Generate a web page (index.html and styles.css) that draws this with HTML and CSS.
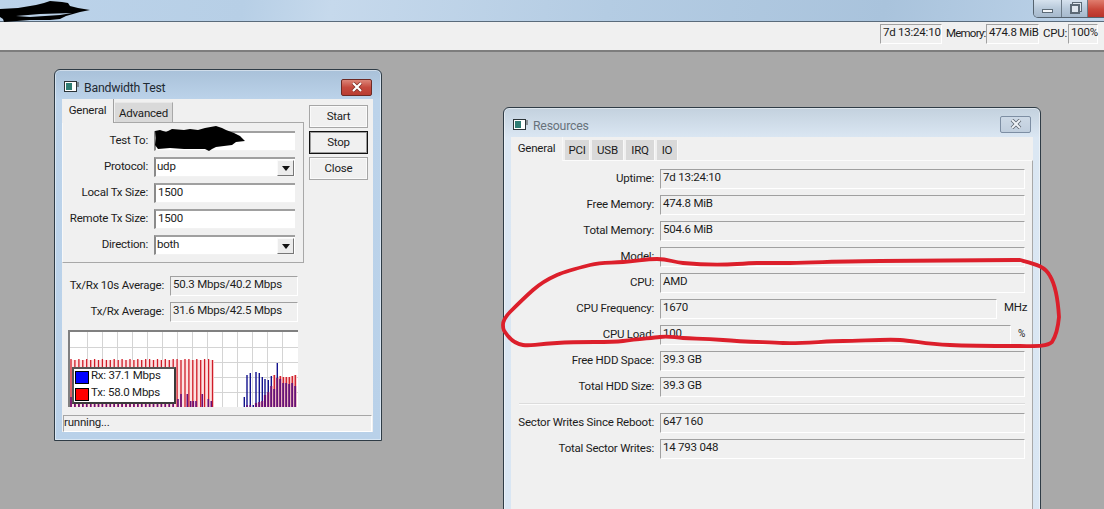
FILE: index.html
```html
<!DOCTYPE html>
<html lang="en">
<head>
<meta charset="utf-8">
<title>WinBox</title>
<link rel="stylesheet" href="styles.css">
</head>
<body>
<div class="app">
  <header class="titlebar">
    <div class="caption-buttons">
      <span class="cap cap-min"><i class="min-glyph"></i></span>
      <span class="cap cap-restore"><i class="restore-glyph"></i></span>
      <span class="cap cap-close"></span>
    </div>
  </header>
  <div class="toolbar">
    <span class="field-ro stat stat-time">7d 13:24:10</span>
    <span class="stat-label stat-label-mem">Memory:</span>
    <span class="field-ro stat stat-mem">474.8 MiB</span>
    <span class="stat-label stat-label-cpu">CPU:</span>
    <span class="field-ro stat stat-cpu">100%</span>
  </div>
  <main class="desktop">
    <section class="window win-bw">
      <div class="win-title">
        <svg class="win-icon" width="15" height="12" viewBox="0 0 15 12"><rect x=".5" y=".5" width="12" height="10" fill="#fff" stroke="#2c3438"/><rect x="2" y="2" width="6" height="7" fill="#2f7d74"/><path d="M14 1v5" stroke="#444" stroke-width="1"/></svg>
        <span class="win-name">Bandwidth Test</span>
        <span class="close close-active"><svg width="14" height="10" viewBox="0 0 14 10"><path d="M3 1l8 8M11 1l-8 8" stroke="#7c2a22" stroke-width="3.6"/><path d="M3 1l8 8M11 1l-8 8" stroke="#fff" stroke-width="2.2"/></svg></span>
      </div>
      <div class="win-body">
        <div class="bw-top">
          <div class="bw-left">
            <div class="tabs">
              <span class="tab tab-on tab-on-bw">General</span>
              <span class="tab tab-adv">Advanced</span>
            </div>
            <div class="panel panel-bw">
              <label class="lbl">Test To:</label><span class="field-ed"></span>
              <label class="lbl">Protocol:</label><span class="field-ed combo">udp<i class="drop"></i></span>
              <label class="lbl">Local Tx Size:</label><span class="field-ed">1500</span>
              <label class="lbl">Remote Tx Size:</label><span class="field-ed">1500</span>
              <label class="lbl">Direction:</label><span class="field-ed combo">both<i class="drop"></i></span>
            </div>
          </div>
          <div class="bw-buttons">
            <button class="btn">Start</button>
            <button class="btn btn-default">Stop</button>
            <button class="btn">Close</button>
          </div>
        </div>
        <div class="bw-stats">
          <label class="lbl">Tx/Rx 10s Average:</label><span class="field-ro">50.3 Mbps/40.2 Mbps</span>
          <label class="lbl">Tx/Rx Average:</label><span class="field-ro">31.6 Mbps/42.5 Mbps</span>
        </div>
        <div class="chart">
          <svg class="chart-svg" width="230" height="77" viewBox="0 0 230 77">
            <path d="M19.5 0V77M34.5 0V77M49.5 0V77M64.5 0V77M79.5 0V77M94.5 0V77M109.5 0V77M124.5 0V77M139.5 0V77M154.5 0V77M169.5 0V77M184.5 0V77M199.5 0V77M214.5 0V77M0 17.5H230M0 32.5H230M0 47.5H230M0 62.5H230" stroke="#d4d4d4" fill="none"/>
            <rect class="band" x="2" y="30" width="144" height="47"/>
            <path class="halo" d="M188 73V77M191.3 72V77M194.3 71V77M197 65V77M200.3 62V77M203.3 56V77M206.3 45V77M209.3 48V77M212.3 46V77M215.3 47V77M218.3 47V77M221.3 47V77M224.3 46V77M227.3 45V77"/>
            <path class="bar-red" d="M3 29V77M6.9 30V77M10.9 29V77M14.8 30V77M18.7 29V77M22.7 30V77M26.6 29V77M30.5 30V77M34.4 29V77M38.4 30V77M42.3 30V77M46.2 29V77M50.2 30V77M54.1 29V77M58 30V77M62 29V77M65.9 30V77M69.8 29V77M73.7 30V77M77.7 29V77M81.6 29V77M85.5 30V77M89.5 29V77M93.4 30V77M97.3 29V77M101.3 30V77M105.2 29V77M109.1 29V77M113 30V77M117 29V77M120.9 29V77M124.8 30V77M128.8 29V77M132.7 30V77M136.6 29V77M140.6 29V77M144.5 30V77"/>
            <path class="bar-red" d="M188 73V77M191.3 72V77M194.3 71V77M197 65V77M200.3 62V77M203.3 56V77M206.3 45V77M209.3 48V77M212.3 46V77M215.3 47V77M218.3 47V77M221.3 47V77M224.3 46V77M227.3 45V77"/>
            <path class="bar-blue" d="M176.3 67V77M179 45V77M182.3 43V77M185.3 75V77M188 42V77M191.3 43V77M194.3 47V77M197 49V77M200.3 50V77M203.3 46V77M206.3 59V77M209.3 33V77M212.3 49V77M215.3 53V77M218.3 53V77M221.3 54V77M224.3 53V77M227.3 56V77"/>
            <path class="bar-purple" d="M3 67V77M6.9 74V77M10.9 74V77M14.8 74V77M18.7 74V77M22.7 74V77M26.6 74V77M30.5 74V77M34.4 74V77M38.4 74V77M42.3 74V77M46.2 74V77M50.2 74V77M54.1 74V77M58 74V77M62 74V77M65.9 74V77M69.8 74V77M73.7 74V77M77.7 74V77M81.6 74V77M85.5 74V77M89.5 74V77M93.4 74V77M97.3 74V77M101.3 74V77M105.2 74V77M110 69V77M113 64V77M119.3 64V77M122.7 71V77M125.3 71V77M128 71V77M134.3 64V77M140.3 69V77M143.3 71V77"/>
            <path class="bar-purple" d="M179 75V77M182.3 75V77M188 73V77M191.3 72V77M194.3 71V77M197 65V77M200.3 62V77M203.3 56V77M206.3 59V77M209.3 48V77M212.3 49V77M215.3 53V77M218.3 53V77M221.3 54V77M224.3 53V77M227.3 56V77"/>
          </svg>
          <div class="legend">
            <div class="legend-row"><i class="swatch swatch-rx"></i><span class="legend-text">Rx: 37.1 Mbps</span></div>
            <div class="legend-row"><i class="swatch swatch-tx"></i><span class="legend-text">Tx: 58.0 Mbps</span></div>
          </div>
        </div>
        <div class="statusbar">running...</div>
      </div>
    </section>

    <section class="window win-res">
      <div class="win-title">
        <svg class="win-icon" width="15" height="12" viewBox="0 0 15 12"><rect x=".5" y=".5" width="12" height="10" fill="#fff" stroke="#2c3438"/><rect x="2" y="2" width="6" height="7" fill="#2f7d74"/><path d="M14 1v5" stroke="#444" stroke-width="1"/></svg>
        <span class="win-name win-name-off">Resources</span>
        <span class="close close-off"><svg width="14" height="10" viewBox="0 0 14 10"><path d="M3 1l8 8M11 1l-8 8" stroke="#5d6670" stroke-width="3.6"/><path d="M3 1l8 8M11 1l-8 8" stroke="#eef2f6" stroke-width="2"/></svg></span>
      </div>
      <div class="win-body">
        <div class="tabs tabs-res">
          <span class="tab tab-on tab-on-res">General</span>
          <span class="tab tab-pci">PCI</span>
          <span class="tab tab-usb">USB</span>
          <span class="tab tab-irq">IRQ</span>
          <span class="tab tab-io">IO</span>
        </div>
        <div class="panel panel-res">
          <label class="lbl">Uptime:</label><span class="field-ro">7d 13:24:10</span>
          <label class="lbl">Free Memory:</label><span class="field-ro">474.8 MiB</span>
          <label class="lbl">Total Memory:</label><span class="field-ro">504.6 MiB</span>
          <label class="lbl">Model:</label><span class="field-ro"></span>
          <label class="lbl">CPU:</label><span class="field-ro">AMD</span>
          <label class="lbl">CPU Frequency:</label><div class="unit-row"><span class="field-ro grow">1670</span><span class="unit unit-mhz">MHz</span></div>
          <label class="lbl">CPU Load:</label><div class="unit-row"><span class="field-ro grow">100</span><span class="unit unit-pct">%</span></div>
          <label class="lbl">Free HDD Space:</label><span class="field-ro">39.3 GB</span>
          <label class="lbl">Total HDD Size:</label><span class="field-ro">39.3 GB</span>
          <hr class="sep">
          <label class="lbl">Sector Writes Since Reboot:</label><span class="field-ro">647 160</span>
          <label class="lbl">Total Sector Writes:</label><span class="field-ro">14 793 048</span>
        </div>
      </div>
    </section>
  </main>

  <svg class="scribble" width="1104" height="509" viewBox="0 0 1104 509">
    <path class="ink" d="M0 9L18 8L36 5L44 3L50 1L62 2L68 3L70 6L78 8L90 10L80 12L73 14L66 16L60 19L50 20L30 20L4 22L3 19L0 17Z"/>
    <path class="ink-gap" d="M16 16L40 14L72 13L60 15L30 17Z"/>
    <path class="ink" d="M155 131L160 130L166 132L172 129L184 130L190 129L198 130L205 128L216 126L222 128L226 130L234 133L240 136L245 141L236 142L232 145L224 146L216 147L212 149L209 151L205 149L196 149L184 149L170 148L158 149L155 145L156 138Z"/>
    <path class="pen" d="M790 263C830 262 851 261 880 261S965 260 1020 260C1035 264 1045 266 1050 276C1056 286 1058 300 1059 317C1058 328 1056 336 1052 342C1046 347 1035 346 1020 346S970 346 950 345C925 344 915 341 900 340S860 341 843 341S800 344 783 343S745 342 723 340S695 339 683 338S668 336 660 337S640 339 623 341S585 341 557 343S530 346 523 345S512 341 508 336S503 330 503 325S506 316 510 312S524 298 533 290S548 279 557 275S578 268 590 265S608 263 623 262S645 259 657 259S672 262 683 263S720 265 737 264S750 263 757 263S775 263 790 263Z"/>
  </svg>
</div>
</body>
</html>
```
FILE: styles.css
```css
* { box-sizing: border-box; }
html, body { margin: 0; height: 100%; overflow: hidden; }
body { font: 11.5px/1 Roboto, "Liberation Sans", Arial, sans-serif; letter-spacing: -.22px; color: #1c1c1c; }

.app { position: relative; display: flex; flex-direction: column; height: 509px; overflow: hidden; }

.titlebar { height: 22px; display: flex; justify-content: flex-end; align-items: flex-start; background: linear-gradient(100deg, #bcd3ea 0%, #b7cfe6 22%, #c6d9ec 30%, #b4cce3 55%, #a9c3dc 80%, #bdd3e9 100%); border-bottom: 1px solid #5a6b7b; }
.caption-buttons { display: flex; height: 18px; border: 1px solid #55636f; border-top: 0; border-radius: 0 0 0 5px; overflow: hidden; margin-right: -2px; }
.cap { display: flex; align-items: center; justify-content: center; height: 100%; border-right: 1px solid #6b7a87; background: linear-gradient(#d6e2ee, #b8c9da 50%, #a6b9cc); }
.cap-min { width: 28px; }
.cap-restore { width: 26px; }
.cap-close { width: 17px; border-right: 0; background: linear-gradient(#e07d6e, #c9473a 55%, #b8332a); }
.min-glyph { display: block; width: 11px; height: 4px; margin-top: 5px; background: #f4f7fa; border: 1px solid #5c6a76; }
.restore-glyph { display: block; width: 10px; height: 10px; background: #dfe7ef; border: 2px solid #5c6a76; box-shadow: 2px -2px 0 -1px #dfe7ef, 2px -2px 0 0 #5c6a76; }

.toolbar { height: 30px; flex: none; display: flex; align-items: center; justify-content: flex-end; padding: 0 6px 5px 0; background: #f0f0f0; border-bottom: 2px solid #7d7d7d; }
.stat { height: 17px; padding-bottom: 1px; }
.stat-time { width: 62px; }
.stat-mem { width: 53px; }
.stat-cpu { width: 30px; }
.stat-label { margin: 0 2px 0 4px; white-space: nowrap; }
.stat-label-mem { width: 38px; letter-spacing: -.75px; }
.stat-label-cpu { margin-right: 1px; margin-left: 4px; }

.desktop { position: relative; flex: 1; background: #a9a9a9; overflow: hidden; }

.window { position: absolute; display: flex; flex-direction: column; border: 1px solid #2f3c46; border-radius: 6px 6px 0 0; box-shadow: inset 0 0 0 1px rgba(255, 255, 255, .45); padding: 0 8px 8px 7px; }
.win-bw { left: 54px; top: 17px; width: 328px; height: 372px; background: linear-gradient(#a9c1d9, #bcd3ea 30px, #b9d1e9); }
.win-res { left: 503px; top: 55px; width: 538px; height: 420px; background: linear-gradient(#c3d1de, #dbe7f3 30px, #d9e6f3); padding-right: 7px; }

.win-title { height: 29px; flex: none; display: flex; align-items: center; padding: 5px 1px 0 2px; }
.win-icon { flex: none; margin-right: 5px; }
.win-name { flex: 1; font-size: 12.3px; color: #1f2a33; padding-top: 2px; }
.win-name-off { color: #68727b; }
.close { display: flex; align-items: center; justify-content: center; width: 31px; height: 17px; border-radius: 2px; }
.close-active { background: linear-gradient(#dc8578, #c54a3e 50%, #b93c31); border: 1px solid #6d2a24; }
.close-off { background: linear-gradient(#cdd9e6, #c0cedd); border: 1px solid #7d8ea3; margin-right: 1px; margin-top: -2px; }

.win-body { flex: 1; background: #f0f0f0; display: flex; flex-direction: column; min-height: 0; }

.bw-top { display: flex; gap: 5px; }
.bw-left { width: 242px; flex: none; }
.bw-buttons { display: flex; flex-direction: column; gap: 3px; margin-top: 6px; width: 59px; }
.btn { height: 23px; font: inherit; letter-spacing: inherit; color: inherit; background: #f0f0f0; border: 1px solid #a6a6a6; padding: 1px 0 0; box-shadow: inset 0 0 0 1px #fafafa; }
.btn-default { border-color: #111; box-shadow: inset 0 0 0 1px rgba(0, 0, 0, .35); }

.tabs { display: flex; align-items: flex-end; height: 23px; }
.tab { display: flex; align-items: center; justify-content: center; height: 20px; background: #d9d9d9; border-right: 1px solid #f8f8f8; padding-top: 2px; }
.tab-on { position: relative; z-index: 1; height: 24px; margin-bottom: -1px; background: #f0f0f0; border-right: 1px solid #a0a0a0; padding-top: 0; }
.tab-on-bw { width: 52px; }
.tab-adv { width: 58px; margin-left: 1px; border-right-color: #a8a8a8; border-top: 1px solid #e8e8e8; }
.tabs-res { gap: 2px; }
.tab-on-res { width: 52px; border-right-color: #f8f8f8; }
.tab-pci { width: 25px; }
.tab-usb { width: 32px; }
.tab-irq { width: 29px; }
.tab-io { width: 21px; }

.panel { display: grid; align-content: start; row-gap: 6px; }
.panel-bw { height: 141px; grid-template-columns: 85px 141px; column-gap: 6px; padding-top: 8px; border: 1px solid #a8a8a8; border-left-color: #f8f8f8; }
.panel-res { flex: 1; grid-template-columns: 143px 365px; column-gap: 6px; padding-top: 8px; border-top: 1px solid #fbfbfb; border-right: 1px solid #a8a8a8; }

.lbl { display: flex; align-items: center; justify-content: flex-end; white-space: nowrap; padding-bottom: 1px; }
.field-ed, .field-ro { display: flex; align-items: center; padding-left: 2px; padding-bottom: 2px; min-width: 0; height: 20px; white-space: nowrap; }
.field-ed { position: relative; background: #fff; border-top: 2px solid #a0a0a0; border-left: 2px solid #8a8a8a; border-bottom: 1px solid #f2f2f2; }
.field-ro { background: #f0f0f0; border-top: 1px solid #a0a0a0; border-left: 1px solid #a0a0a0; border-right: 1px solid #fff; border-bottom: 1px solid #fff; }
.combo { padding-left: 1px; }
.drop { position: absolute; right: 1px; top: 1px; width: 17px; height: 16px; background: #ececec; border: 1px solid; border-color: #fafafa #777 #777 #fafafa; display: flex; align-items: center; justify-content: center; }
.drop::after { content: ""; border: 4px solid transparent; border-top: 5px solid #111; border-bottom: 0; }

.bw-stats { display: grid; grid-template-columns: 102px 128px; column-gap: 6px; row-gap: 6px; margin-top: 13px; }

.chart { position: relative; width: 230px; height: 77px; margin: 8px 0 0 6px; background: #fff; border-top: 2px solid #808080; border-left: 2px solid #808080; flex: none; overflow: hidden; }
.chart-svg { display: block; margin: -2px 0 0 -2px; }
.band { fill: #fde2e2; }
.halo { fill: none; stroke: #f8c8c8; stroke-width: 3; }
.bar-red { fill: none; stroke: #cf1c28; stroke-width: 1.3; }
.bar-blue { fill: none; stroke: #12128e; stroke-width: 1.4; }
.bar-purple { fill: none; stroke: #6a1078; stroke-width: 1.6; }

.legend { position: absolute; left: 2px; top: 35px; width: 104px; height: 37px; display: flex; flex-direction: column; justify-content: center; gap: 3px; padding-left: 1px; background: #fff; border: 2px solid; border-color: #555 #3a3a3a #3a3a3a #555; }
.legend-row { display: flex; align-items: center; gap: 2px; height: 14px; }
.legend-text { padding-bottom: 2px; }
.swatch { display: block; width: 14px; height: 13px; border: 1px solid #000; }
.swatch-rx { background: #0000fe; }
.swatch-tx { background: #fe0000; }

.statusbar { display: flex; align-items: center; height: 17px; margin: 8px 1px 0 1px; padding-bottom: 1px; border: 1px solid; border-color: #a6a6a6 #fff #fff #a6a6a6; flex: none; }

.unit-row { display: flex; align-items: center; }
.grow { flex: 1; }
.unit { margin-left: 7px; padding-bottom: 2px; }
.unit-mhz { width: 21px; }
.unit-pct { width: 7px; font-size: 10px; }

.sep { grid-column: 1 / -1; height: 1px; border: 0; margin: 1px 0 2px 8px; background: #fcfcfc; box-shadow: 0 -1px 0 #dcdcdc; }

.scribble { position: absolute; left: 0; top: 0; pointer-events: none; }
.ink { fill: #000; }
.ink-gap { fill: #b9d0e7; }
.pen { fill: none; stroke: #dc1f2b; stroke-width: 3.8; stroke-linejoin: round; }
```
